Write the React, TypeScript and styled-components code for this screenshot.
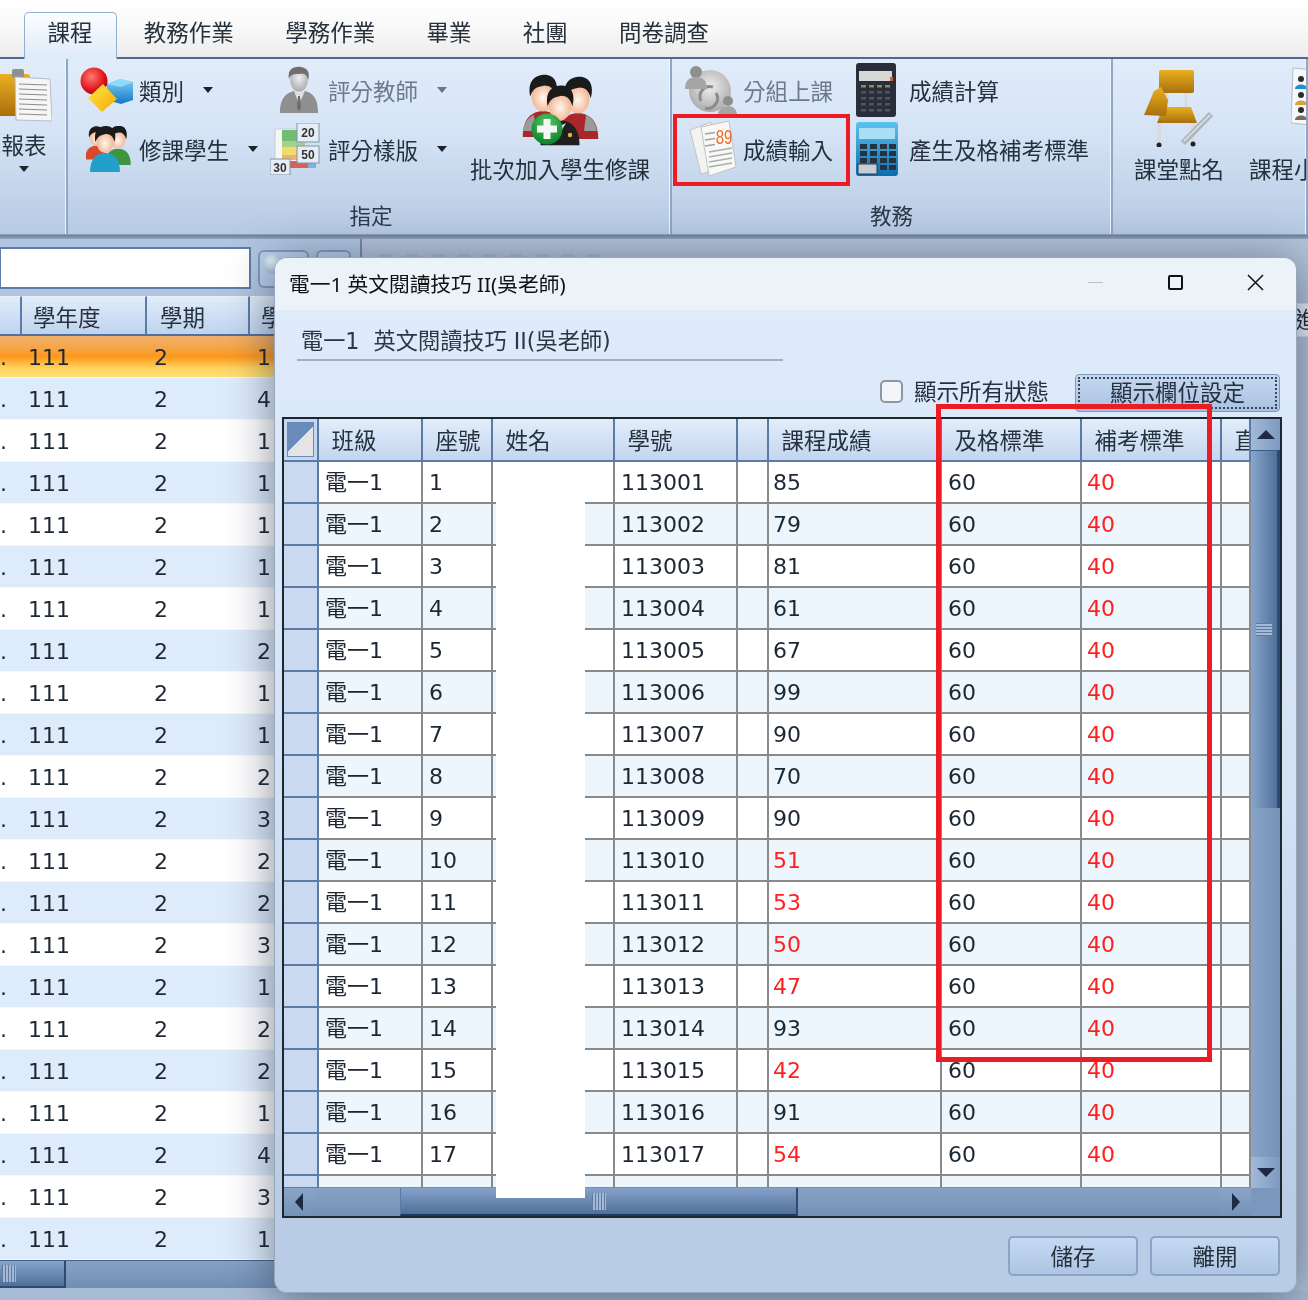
import styled, { createGlobalStyle } from 'styled-components';

const TEXT_FONT = `"DejaVu Sans", "Noto Sans CJK TC", sans-serif`;
const TITLE_FONT = `"Noto Sans", "Noto Sans CJK TC", sans-serif`;
const COLUMNS = '35px 104px 70px 122px 123px 31px 173px 140px 140px 29px';

const scores = [85, 79, 81, 61, 67, 99, 90, 70, 90, 51, 53, 50, 47, 93, 42, 91, 54];
const terms = [1, 4, 1, 1, 1, 1, 1, 2, 1, 1, 2, 3, 2, 2, 3, 1, 2, 2, 1, 4, 3, 1];
const tabs = ['課程', '教務作業', '學務作業', '畢業', '社團', '問卷調查'];

const GlobalStyle = createGlobalStyle`
   html, body {
      margin: 0;
      background: #a9bcd6;
   }
   *, *::before, *::after {
      box-sizing: border-box;
   }
`;

const Page = styled.div`
   position: relative;
   width: 1308px;
   height: 1300px;
   overflow: hidden;
   background: #a9bcd6;
   color: #1c2733;
   font-family: ${TEXT_FONT};
   font-size: 22.5px;
   filter: blur(0.5px);
`;

const Defs = styled.svg`
   position: absolute;
   width: 0;
   height: 0;
`;

/* top tabs */
const TabBar = styled.div`
   display: flex;
   align-items: flex-end;
   height: 59px;
   padding: 0 0 0 24px;
   background: linear-gradient(#ffffff, #f8f8f8 50%, #ececec);
   border-bottom: 2px solid #50698f;
`;

const Tab = styled.div<{ $active?: boolean }>`
   height: 47px;
   margin-right: 3.8px;
   margin-bottom: -2px;
   padding: 5px 23px 0 22.5px;
   line-height: 30px;
   color: #27313c;
   border: 1px solid ${p => (p.$active ? '#8fb0d2' : 'transparent')};
   border-bottom: 0;
   border-radius: 5px 5px 0 0;
   background: ${p => (p.$active ? 'linear-gradient(#fbfdff, #dfeaf8)' : 'transparent')};
`;

/* ribbon */
const Ribbon = styled.div`
   display: flex;
   height: 176px;
   background: linear-gradient(#e1ecfa, #d6e4f6 40%, #b6cae3);
   border-bottom: 1px solid #8ba0bd;
`;

const Group = styled.div<{ $width: number }>`
   display: flex;
   flex-direction: column;
   flex: none;
   width: ${p => p.$width}px;
   border-right: 2px solid #8fa6c4;
   box-shadow: inset -1px 0 0 #eef4fb;
   overflow: hidden;
`;

const GroupBody = styled.div<{ $pad?: number; $gap?: number }>`
   display: flex;
   flex: 1;
   gap: ${p => p.$gap ?? 0}px;
   padding: 1px 0 0 ${p => p.$pad ?? 0}px;
`;

const GroupLabel = styled.div<{ $shift?: number }>`
   height: 29px;
   padding: 0 0 4px ${p => p.$shift ?? 0}px;
   line-height: 24px;
   font-size: 21.5px;
   text-align: center;
   color: #2d3a49;
`;

const ItemColumn = styled.div<{ $width: number }>`
   flex: none;
   width: ${p => p.$width}px;
`;

const SmallItem = styled.div<{ $off?: boolean; $marked?: boolean }>`
   position: relative;
   display: flex;
   align-items: center;
   height: 59px;
   white-space: nowrap;
   color: ${p => (p.$off ? '#6d7a89' : '#26313d')};

   ${p =>
      p.$marked &&
      `
      &::after {
         content: '';
         position: absolute;
         left: -10px;
         top: -5px;
         width: 177px;
         height: 72px;
         border: 4px solid #ed1c24;
      }
   `}
`;

const IconSlot = styled.div<{ $width: number; $start?: boolean }>`
   display: flex;
   flex: none;
   align-items: center;
   justify-content: ${p => (p.$start ? 'flex-start' : 'center')};
   width: ${p => p.$width}px;
`;

const Caret = styled.span<{ $off?: boolean }>`
   flex: none;
   width: 0;
   height: 0;
   margin-left: 19px;
   border-style: solid;
   border-width: 6px 5px 0;
   border-color: ${p => (p.$off ? '#6b7684' : '#1d232b')} transparent transparent;
`;

const BigItem = styled.div<{ $width: number }>`
   display: flex;
   flex: none;
   flex-direction: column;
   align-items: center;
   width: ${p => p.$width}px;
   white-space: nowrap;
   color: #26313d;
`;

const BigIcon = styled.div`
   display: flex;
   align-items: flex-end;
   justify-content: center;
   height: 87px;
   margin-bottom: 5px;
`;

const RosterSlot = styled.div`
   padding: 0 0 13px 42px;
`;

const ReportItem = styled.div`
   display: flex;
   flex-direction: column;
   align-items: center;
   width: 48px;
   padding-top: 8px;
   color: #26313d;
`;

const ReportText = styled.span`
   margin-top: 6px;
`;

const ReportCaret = styled(Caret)`
   margin: 6px 0 0;
`;

const RibbonEdge = styled.div`
   height: 4px;
   background: linear-gradient(#6b7f9c, #93a3b9);
`;

/* area behind the dialog */
const Workspace = styled.div`
   display: flex;
   height: 1052px;
`;

const LeftPane = styled.div`
   flex: none;
   width: 362px;
`;

const SearchRow = styled.div`
   display: flex;
   gap: 7px;
   height: 57px;
   padding-top: 8px;
   background: #b1c5e0;
   border-right: 2px solid #6f89ad;
`;

const SearchInput = styled.div`
   width: 252px;
   height: 42px;
   margin-left: -1px;
   background: #fff;
   border: 2px solid #5d7ba6;
`;

const SearchButton = styled.div<{ $width: number }>`
   position: relative;
   width: ${p => p.$width}px;
   height: 38px;
   margin-top: 3px;
   border: 2px solid #7f99bd;
   border-radius: 6px;
   background: #bccfe8;
`;

const Orb = styled.div`
   position: absolute;
   left: 3px;
   top: 2px;
   width: 20px;
   height: 20px;
   border-radius: 50%;
   background: radial-gradient(circle at 40% 35%, #eef6fb, #9fc0d6 70%, #6e93ad);
`;

const BackHead = styled.div`
   display: grid;
   grid-template-columns: 22px 125px 103px 112px;
   height: 40px;
   background: #a9bcd6;
`;

const BackHeadCell = styled.div<{ $pad: number }>`
   padding-left: ${p => p.$pad}px;
   line-height: 42px;
   overflow: hidden;
   white-space: nowrap;
   color: #27313c;
   background: linear-gradient(#e1ecfa, #bfd3ee);
   border-right: 2px solid #5c7ba6;
   border-top: 1px solid #e8f0fa;
   border-bottom: 2px solid #50709d;
`;

const BackRow = styled.div<{ $tone: 'picked' | 'white' | 'blue' }>`
   display: grid;
   grid-template-columns: 22px 125px 103px 112px;
   height: 42px;
   line-height: 43px;
   font-size: 22px;
   color: #1d2833;
   border-bottom: 1px solid #f4f8fd;
   background: ${p =>
      p.$tone === 'picked'
         ? 'linear-gradient(#efb06e, #f7a446 30%, #fd981d 50%, #ffd25c 78%, #ffe07a)'
         : p.$tone === 'blue'
         ? '#deebfa'
         : '#fff'};
`;

const BackCell = styled.div<{ $pad: number }>`
   padding-left: ${p => p.$pad}px;
   overflow: hidden;
`;

const BackScroll = styled.div`
   height: 28px;
   background: linear-gradient(#88a2c6, #6f8eb4);
   border-top: 1px solid #45618a;
`;

const BackThumb = styled.div`
   display: flex;
   align-items: center;
   width: 66px;
   height: 27px;
   padding-left: 2px;
   background: linear-gradient(#86a4cc, #4f7099);
   border-right: 2px solid #2e4a72;
   border-bottom: 2px solid #2e4a72;
`;

const Grip = styled.div<{ $vertical?: boolean }>`
   width: ${p => (p.$vertical ? '16px' : '14px')};
   height: ${p => (p.$vertical ? '13px' : '17px')};
   background: ${p =>
      p.$vertical
         ? 'repeating-linear-gradient(#5d7aa0 0 1px, #a5b9d4 1px 3px)'
         : 'repeating-linear-gradient(90deg, #5d7aa0 0 1px, #a5b9d4 1px 3px)'};
`;

const RightPane = styled.div`
   flex: 1;
   min-width: 0;
   padding-top: 15px;
   background: #b3c3d9;
`;

/* tops of letters hidden by the dialog, too little of them shows to read */
const BackMarks = styled.div`
   width: 230px;
   height: 3px;
   margin: 0 0 46px 18px;
   background: repeating-linear-gradient(90deg, #a6b8d2 0 12px, transparent 12px 26px);
`;

const SideHead = styled.div`
   width: 14px;
   height: 34px;
   margin-left: auto;
   padding-left: 1px;
   line-height: 32px;
   overflow: hidden;
   white-space: nowrap;
   background: #e9f0f7;
   border-top: 1px solid #cfdbe7;
   border-bottom: 1px solid #cfdbe7;
`;

/* dialog */
const Dialog = styled.div`
   position: absolute;
   left: 274px;
   top: 257px;
   display: flex;
   flex-direction: column;
   width: 1023px;
   height: 1036px;
   overflow: hidden;
   border: 1px solid #98a7bc;
   border-radius: 13px;
   box-shadow: 0 6px 46px rgba(28, 38, 58, 0.55);
`;

const TitleBar = styled.div`
   display: flex;
   align-items: center;
   flex: none;
   height: 52px;
   padding: 0 0 3px 14px;
   background: #ebf3f9;
   color: #111;
   font-family: ${TITLE_FONT};
   font-size: 20.7px;
`;

const TitleText = styled.div`
   flex: 1;
`;

const WindowButton = styled.div<{ $width: number }>`
   display: flex;
   flex: none;
   align-items: center;
   justify-content: center;
   width: ${p => p.$width}px;
`;

const MinDash = styled.div`
   width: 15px;
   height: 1px;
   background: #b9c3cc;
`;

const MaxBox = styled.div`
   width: 15px;
   height: 15px;
   border: 2px solid #111;
   border-radius: 2px;
`;

const DialogBody = styled.div`
   display: flex;
   flex: 1;
   flex-direction: column;
   padding: 0 15px 0 7px;
   background: linear-gradient(#dfebfb, #d2e1f4 50%, #b8cce5 92%);
`;

const Heading = styled.div`
   display: flex;
   align-items: flex-end;
   flex: none;
   width: 486px;
   height: 51px;
   margin-left: 15px;
   padding: 0 0 5px 4px;
   line-height: 26px;
   font-size: 22.2px;
   white-space: pre;
   color: #2c3743;
   border-bottom: 2px solid #a6aeba;
`;

const OptionRow = styled.div`
   display: flex;
   align-items: center;
   justify-content: flex-end;
   flex: none;
   height: 38px;
   margin: 13px 1px 0 0;
`;

const CheckBox = styled.div`
   width: 23px;
   height: 23px;
   margin: 0 11px 4px 0;
   background: #f3f5f8;
   border: 2px solid #8d98a5;
   border-radius: 5px;
`;

const CheckText = styled.div`
   margin: 0 26px 6px 0;
   color: #26313d;
`;

const FocusButton = styled.div`
   width: 205px;
   height: 38px;
   padding: 2px;
   text-align: center;
   color: #26313d;
   background: linear-gradient(#c6d8f0, #a9c2e1);
   border: 1px solid #7f99bd;
   border-radius: 4px;
`;

const FocusInner = styled.div`
   height: 100%;
   line-height: 28px;
   border: 2px dotted #3a4654;
`;

const TableFrame = styled.div`
   position: relative;
   flex: none;
   width: 1000px;
   height: 801px;
   margin-top: 5px;
   background: #fff;
   border: 2px solid #1e2630;
`;

const TableTop = styled.div`
   display: flex;
   height: 769px;
`;

const Cells = styled.div`
   width: 967px;
   height: 769px;
   overflow: hidden;
   background: #fff;
`;

const HeadRow = styled.div`
   display: grid;
   grid-template-columns: ${COLUMNS};
   height: 43px;
`;

const CornerCell = styled.div`
   padding: 4px;
   background: #c6d8f0;
   border-right: 2px solid #5b7aa6;
   border-bottom: 2px solid #5b7aa6;
`;

const CornerMark = styled.div`
   width: 100%;
   height: 100%;
   background: linear-gradient(135deg, #6a8bba 50%, #e4e4e4 50%);
   outline: 1px solid #6a8bba;
`;

const HeadCell = styled.div`
   padding-left: 12.5px;
   line-height: 45px;
   overflow: hidden;
   white-space: nowrap;
   color: #27313c;
   background: linear-gradient(#e2edfb, #c3d6f0);
   border-right: 2px solid #5b7aa6;
   border-bottom: 2px solid #5b7aa6;
`;

const DataRow = styled.div<{ $stripe: boolean; $short?: boolean }>`
   display: grid;
   grid-template-columns: ${COLUMNS};
   height: ${p => (p.$short ? '13px' : '42px')};
   font-size: 22px;
   background: ${p => (p.$stripe ? '#edf5fd' : '#fff')};
`;

const RowHead = styled.div`
   background: #c9daf0;
   border-right: 2px solid #5b7aa6;
   border-bottom: 2px solid #5b7aa6;
`;

const DataCell = styled.div<{ $pad?: number; $low?: boolean }>`
   padding-left: ${p => p.$pad ?? 6}px;
   line-height: 42px;
   overflow: hidden;
   white-space: nowrap;
   color: ${p => (p.$low ? '#ff1f1f' : '#1c2733')};
   border-right: 2px solid #8a8a8a;
   border-bottom: 2px solid #8a8a8a;
`;

const VScroll = styled.div`
   display: flex;
   flex-direction: column;
   flex: 1;
   background: linear-gradient(90deg, #8aa4c8, #7592b8);
`;

const VScrollEnd = styled.div<{ $size: number }>`
   display: flex;
   flex: none;
   align-items: center;
   justify-content: center;
   height: ${p => p.$size}px;
   background: linear-gradient(90deg, #a3bad8, #7d99bf);
`;

const VThumb = styled.div`
   display: flex;
   align-items: center;
   justify-content: center;
   flex: none;
   height: 358px;
   background: linear-gradient(90deg, #88a6cd, #4f7099);
   border-top: 1px solid #3f5c86;
   border-right: 3px solid #2e4a72;
`;

const VScrollGap = styled.div`
   flex: 1;
`;

const ScrollArrow = styled.span<{ $dir: 'up' | 'down' | 'left' | 'right' }>`
   width: 0;
   height: 0;
   border-style: solid;
   border-color: transparent;
   ${p =>
      p.$dir === 'up'
         ? 'border-width: 0 9px 9px; border-bottom-color: #1d2a45;'
         : p.$dir === 'down'
         ? 'border-width: 9px 9px 0; border-top-color: #1d2a45;'
         : p.$dir === 'left'
         ? 'border-width: 9px 8px 9px 0; border-right-color: #1d2a45;'
         : 'border-width: 9px 0 9px 8px; border-left-color: #1d2a45;'}
`;

const HScroll = styled.div`
   display: flex;
   height: 28px;
   background: linear-gradient(#88a2c6, #7391b7);
`;

const HScrollButton = styled.div<{ $width: number }>`
   display: flex;
   flex: none;
   align-items: center;
   justify-content: center;
   width: ${p => p.$width}px;
   background: linear-gradient(#8aa4c8, #7592b8);
`;

const HThumb = styled.div`
   display: flex;
   align-items: center;
   justify-content: center;
   flex: none;
   width: 398px;
   margin-left: 86px;
   background: linear-gradient(#84a2ca, #4f7099);
   border-right: 2px solid #2e4a72;
   border-bottom: 2px solid #22385c;
   border-left: 1px solid #5a7aa5;
`;

const HGap = styled.div`
   flex: 1;
`;

const HCorner = styled.div`
   flex: none;
   width: 29px;
   background: #7b97bd;
`;

const NameCover = styled.div`
   position: absolute;
   left: 212px;
   top: 51px;
   width: 89px;
   height: 728px;
   background: #fff;
`;

const ColumnMark = styled.div`
   position: absolute;
   left: 661px;
   top: 146px;
   width: 276px;
   height: 658px;
   border: 5px solid #ed1c24;
`;

const FooterRow = styled.div`
   display: flex;
   justify-content: flex-end;
   gap: 12px;
   flex: none;
   margin: 18px 1px 0 0;
`;

const FooterButton = styled.div`
   width: 130px;
   height: 40px;
   line-height: 38px;
   text-align: center;
   color: #26313d;
   background: linear-gradient(#c6d9f2, #adc5e3);
   border: 2px solid #8ba3c4;
   border-radius: 5px;
`;

/* ---- drawings ---- */
const Gradients = () => (
   <Defs>
      <defs>
         <radialGradient id="skin" cx="50%" cy="55%" r="60%">
            <stop offset="0" stopColor="#fff6ee" />
            <stop offset="1" stopColor="#f1a97f" />
         </radialGradient>
         <radialGradient id="ball" cx="40%" cy="35%" r="70%">
            <stop offset="0" stopColor="#ff7a70" />
            <stop offset="0.7" stopColor="#e3101a" />
            <stop offset="1" stopColor="#8d0a12" />
         </radialGradient>
         <linearGradient id="blue" x1="0" y1="0" x2="0" y2="1">
            <stop offset="0" stopColor="#7fd0f5" />
            <stop offset="1" stopColor="#1477c4" />
         </linearGradient>
         <linearGradient id="gold" x1="0" y1="0" x2="1" y2="1">
            <stop offset="0" stopColor="#ffe84a" />
            <stop offset="1" stopColor="#f7a800" />
         </linearGradient>
         <linearGradient id="wood" x1="0" y1="0" x2="0" y2="1">
            <stop offset="0" stopColor="#eab020" />
            <stop offset="1" stopColor="#a86f0e" />
         </linearGradient>
         <radialGradient id="grayball" cx="50%" cy="40%" r="65%">
            <stop offset="0" stopColor="#eeeeee" />
            <stop offset="1" stopColor="#a6a6a6" />
         </radialGradient>
         <radialGradient id="greenball" cx="50%" cy="30%" r="70%">
            <stop offset="0" stopColor="#58c768" />
            <stop offset="1" stopColor="#0c8127" />
         </radialGradient>
         <linearGradient id="calc" x1="0" y1="0" x2="0" y2="1">
            <stop offset="0" stopColor="#5ac4ee" />
            <stop offset="1" stopColor="#0b6cae" />
         </linearGradient>
      </defs>
   </Defs>
);

const Person = ({ x, y, s, shirt }: { x: number; y: number; s: number; shirt: string }) => (
   <g transform={`translate(${x} ${y}) scale(${s})`}>
      <path d="M-15 34C-15 20-8 15 0 15S15 20 15 34Z" fill={shirt} />
      <ellipse cx="0" cy="4" rx="8.5" ry="11" fill="url(#skin)" />
      <path d="M-9.5 4C-12-9-4-12 1-12 9-12 12-5 9.5 4 8-2 5-4 1-4-3-3-7-3-9.5 4Z" fill="#1b1b1b" />
   </g>
);

const ClipboardIcon = () => (
   <svg width="56" height="54" viewBox="0 0 56 54">
      <rect x="2" y="6" width="32" height="42" rx="3" fill="url(#wood)" />
      <rect x="16" y="1" width="12" height="9" rx="2" fill="#8f8f8f" />
      <path d="M19 9 54 11 56 53 20 52Z" fill="#f6f6f6" stroke="#b5bdc8" />
      {[16, 21, 26, 31, 36, 41, 46].map(y => (
         <path key={y} d={`M23 ${y} 51 ${y + 1}`} stroke="#8d8d8d" strokeWidth="1.2" />
      ))}
   </svg>
);

const ShapesIcon = () => (
   <svg width="54" height="46" viewBox="0 0 54 46">
      <path d="M27 17 40 12 53 15V33L41 37 27 33Z" fill="url(#blue)" />
      <path d="M27 17 40 12 53 15 41 20Z" fill="#8edaf8" />
      <circle cx="14" cy="14" r="13.5" fill="url(#ball)" />
      <path d="M23 17 37 32 22 45 8 31Z" fill="url(#gold)" />
   </svg>
);

const ManIcon = () => (
   <svg width="40" height="48" viewBox="0 0 40 48">
      <path d="M1 47C1 32 7 27 15 25L20 29 26 25C34 27 39 32 39 47Z" fill="#8f8f8f" />
      <path d="M15 25 20 38 26 25 20 29Z" fill="#e4e4e4" />
      <path d="M19 30 21 30 22 42 20 45 18 42Z" fill="#6c6c6c" />
      <ellipse cx="20" cy="14" rx="9" ry="11.5" fill="url(#grayball)" />
      <path d="M10 13C8 3 15 0 22 1 30 2 31 9 29 14 28 8 25 7 20 8 15 8 12 8 10 13Z" fill="#6f6f6f" />
   </svg>
);

const StudentsIcon = () => (
   <svg width="48" height="46" viewBox="0 0 48 46">
      <Person x={10} y={9} s={0.72} shirt="#d94a2c" />
      <Person x={32} y={10} s={0.85} shirt="#3f9440" />
      <Person x={19} y={12} s={1} shirt="#22a0cc" />
   </svg>
);

const ScoreIcon = () => (
   <svg width="50" height="52" viewBox="0 0 50 52">
      <rect x="5" y="6" width="31" height="36" fill="#f5f7f2" stroke="#c6cdd6" />
      <rect x="12" y="7" width="23" height="11" fill="#6fbe72" />
      <rect x="12" y="18" width="23" height="6" fill="#a6d18a" />
      <rect x="12" y="24" width="23" height="8" fill="#f0dc6e" />
      <rect x="12" y="32" width="23" height="5" fill="#efb26a" />
      <rect x="18" y="38" width="20" height="7" fill="#d9615a" />
      <rect x="38" y="38" width="8" height="7" fill="#7fb0e0" />
      <rect x="27" y="0" width="22" height="19" fill="#e6edf6" stroke="#7f93ac" />
      <rect x="27" y="23" width="22" height="17" fill="#e6edf6" stroke="#7f93ac" />
      <rect x="0" y="36" width="20" height="16" fill="#e6edf6" stroke="#7f93ac" />
      <text x="38" y="14" textAnchor="middle" fontSize="12" fontWeight="700" fontFamily="Liberation Sans" fill="#333">20</text>
      <text x="38" y="36" textAnchor="middle" fontSize="12" fontWeight="700" fontFamily="Liberation Sans" fill="#333">50</text>
      <text x="10" y="49" textAnchor="middle" fontSize="12" fontWeight="700" fontFamily="Liberation Sans" fill="#333">30</text>
   </svg>
);

const BatchIcon = () => (
   <svg width="80" height="76" viewBox="0 0 80 76">
      <Person x={23} y={20} s={1.35} shirt="#a9272b" />
      <Person x={58} y={22} s={1.35} shirt="#a9272b" />
      <path d="M3 60C5 50 9 46 14 44L16 60ZM77 60C75 50 71 46 66 44L64 60Z" fill="#9a9a9a" />
      <Person x={40} y={30} s={1.3} shirt="#1f1f1f" />
      <path d="M34 52 40 62 46 52 40 55Z" fill="#e8e8e8" />
      <circle cx="50" cy="64" r="2.2" fill="#e2b72f" />
      <circle cx="27" cy="58" r="15.5" fill="url(#greenball)" />
      <path d="M23.5 48H30.5V54.5H37V61.5H30.5V68H23.5V61.5H17V54.5H23.5Z" fill="#f4f7f4" />
   </svg>
);

const GroupsIcon = () => (
   <svg width="54" height="54" viewBox="0 0 54 54">
      <circle cx="27" cy="28" r="21" fill="url(#grayball)" />
      <path d="M18 38A10 10 0 0 1 30 24M33 30A10 10 0 0 1 22 45" stroke="#8c8c8c" strokeWidth="3" fill="none" />
      <circle cx="13" cy="9" r="6" fill="#8e8e8e" />
      <path d="M2 26C2 16 8 14 13 14S24 16 24 26Z" fill="#a5a5a5" />
      <circle cx="45" cy="38" r="5" fill="#8e8e8e" />
      <path d="M35 53C35 46 40 43 45 43S54 46 54 53Z" fill="#a5a5a5" />
   </svg>
);

const EntryIcon = () => (
   <svg width="48" height="58" viewBox="0 0 48 58">
      <path d="M1 10 22 2 32 48 12 54Z" fill="#f3f3f0" stroke="#c1c4c6" />
      <path d="M12 7 40 1 47 47 20 56Z" fill="#f8f8f5" stroke="#bfc3c6" />
      {[14, 20, 26].map(y => (
         <path key={y} d={`M16 ${y} 26 ${y - 1.5}`} stroke="#9fa4a8" strokeWidth="1.6" />
      ))}
      {[32, 37, 42, 47].map(y => (
         <path key={y} d={`M20 ${y} 43 ${y - 4}`} stroke="#a9aeb2" strokeWidth="1.6" />
      ))}
      <text x="35" y="23" textAnchor="middle" fontSize="15" fontFamily="Liberation Sans" fill="#ef6a2b" transform="translate(0 -6) scale(1 1.3)">89</text>
   </svg>
);

const DarkCalculatorIcon = () => (
   <svg width="40" height="54" viewBox="0 0 40 54">
      <rect width="40" height="54" rx="3" fill="#2a2e3a" />
      <rect x="3" y="8" width="33" height="10" fill="#d7d9d6" />
      {[22, 28, 34, 40, 46].map(y =>
         [5, 13, 21, 29].map(x => <rect key={`${x}-${y}`} x={x} y={y} width="5" height="2.5" fill={y === 22 ? '#8f8b54' : '#4c5468'} />),
      )}
      <rect x="34" y="14" width="3" height="4" fill="#dd5a2a" />
   </svg>
);

const BlueCalculatorIcon = () => (
   <svg width="42" height="54" viewBox="0 0 42 54">
      <rect width="42" height="54" rx="3" fill="url(#calc)" />
      <rect x="3" y="6" width="36" height="11" fill="#a9dff4" />
      {[22, 29, 36].map(y =>
         [4, 14, 24, 33].map(x => <rect key={`${x}-${y}`} x={x} y={y} width="7" height="5" fill="#263240" />),
      )}
      <rect x="2" y="42" width="19" height="10" fill="#c9ced4" stroke="#2b3a4a" />
      {[24, 33].map(x => (
         <rect key={x} x={x} y="43" width="7" height="5" fill="#263240" />
      ))}
   </svg>
);

const ChairIcon = () => (
   <svg width="72" height="78" viewBox="0 0 72 78">
      <path d="M24 22V40M43 22V40" stroke="#d8dce0" strokeWidth="3" />
      <rect x="16" y="1" width="35" height="23" rx="2" fill="url(#wood)" />
      <path d="M20 38H48L54 54H14Z" fill="url(#wood)" />
      <path d="M11 22 18 18 25 31 23 47 1 46Z" fill="url(#wood)" />
      <path d="M16 54V76M50 54V74" stroke="#d8dce0" strokeWidth="4" />
      <circle cx="16" cy="76" r="2.5" fill="#222" />
      <circle cx="50" cy="75" r="2.5" fill="#222" />
      <path d="M40 74 68 45" stroke="#aeb6bf" strokeWidth="6" />
      <path d="M41 72 67 46" stroke="#dfe3e7" strokeWidth="1.5" />
   </svg>
);

const RosterIcon = () => (
   <svg width="48" height="62" viewBox="0 0 48 62">
      <path d="M2 1 47 5V61L0 56Z" fill="#f6f8fa" stroke="#b3bbc6" />
      <circle cx="10" cy="12" r="3" fill="#2c2c2c" />
      <path d="M4 22C4 16 16 16 16 22Z" fill="#1f8fd0" />
      <circle cx="10" cy="28" r="3" fill="#2c2c2c" />
      <path d="M4 38C4 32 16 32 16 38Z" fill="#d7a23a" />
      <circle cx="10" cy="43" r="3" fill="#2c2c2c" />
      <path d="M4 53C4 47 16 47 16 53Z" fill="#7c6a5b" />
   </svg>
);

const CloseIcon = () => (
   <svg width="17" height="17" viewBox="0 0 17 17">
      <path d="M1 1 16 16M16 1 1 16" stroke="#111" strokeWidth="1.5" fill="none" />
   </svg>
);

const Small = ({ icon, slot, label, off, caret, marked, start }: { icon: any; slot: number; label: string; off?: boolean; caret?: boolean; marked?: boolean; start?: boolean }) => (
   <SmallItem $off={off} $marked={marked}>
      <IconSlot $width={slot} $start={start}>
         {icon}
      </IconSlot>
      {label}
      {caret && <Caret $off={off} />}
   </SmallItem>
);

const App = () => {
   return (
      <>
         <GlobalStyle />
         <Page>
            <Gradients />
            <TabBar>
               {tabs.map((t, i) => (
                  <Tab key={t} $active={i === 0}>
                     {t}
                  </Tab>
               ))}
            </TabBar>

            <Ribbon>
               <Group $width={68}>
                  <GroupBody>
                     <ReportItem>
                        <ClipboardIcon />
                        <ReportText>報表</ReportText>
                        <ReportCaret />
                     </ReportItem>
                  </GroupBody>
               </Group>

               <Group $width={604}>
                  <GroupBody $pad={12}>
                     <ItemColumn $width={190}>
                        <Small icon={<ShapesIcon />} slot={59} label="類別" caret start />
                        <Small icon={<StudentsIcon />} slot={59} label="修課學生" caret />
                     </ItemColumn>
                     <ItemColumn $width={200}>
                        <Small icon={<ManIcon />} slot={58} label="評分教師" off caret />
                        <Small icon={<ScoreIcon />} slot={58} label="評分樣版" caret start />
                     </ItemColumn>
                     <BigItem $width={180}>
                        <BigIcon>
                           <BatchIcon />
                        </BigIcon>
                        批次加入學生修課
                     </BigItem>
                  </GroupBody>
                  <GroupLabel $shift={4}>指定</GroupLabel>
               </Group>

               <Group $width={441}>
                  <GroupBody $pad={11}>
                     <ItemColumn $width={173}>
                        <Small icon={<GroupsIcon />} slot={60} label="分組上課" off start />
                        <Small icon={<EntryIcon />} slot={60} label="成績輸入" marked />
                     </ItemColumn>
                     <ItemColumn $width={250}>
                        <Small icon={<DarkCalculatorIcon />} slot={53} label="成績計算" start />
                        <Small icon={<BlueCalculatorIcon />} slot={53} label="產生及格補考標準" start />
                     </ItemColumn>
                  </GroupBody>
                  <GroupLabel>教務</GroupLabel>
               </Group>

               <Group $width={195}>
                  <GroupBody $pad={21} $gap={25}>
                     <BigItem $width={90}>
                        <BigIcon>
                           <ChairIcon />
                        </BigIcon>
                        課堂點名
                     </BigItem>
                     <BigItem $width={90}>
                        <BigIcon>
                           <RosterSlot>
                              <RosterIcon />
                           </RosterSlot>
                        </BigIcon>
                        課程小組
                     </BigItem>
                  </GroupBody>
               </Group>
            </Ribbon>
            <RibbonEdge />

            <Workspace>
               <LeftPane>
                  <SearchRow>
                     <SearchInput />
                     <SearchButton $width={51}>
                        <Orb />
                     </SearchButton>
                     <SearchButton $width={35} />
                  </SearchRow>
                  <BackHead>
                     <BackHeadCell $pad={0} />
                     <BackHeadCell $pad={11}>學年度</BackHeadCell>
                     <BackHeadCell $pad={13}>學期</BackHeadCell>
                     <BackHeadCell $pad={11}>學</BackHeadCell>
                  </BackHead>
                  {terms.map((t, i) => (
                     <BackRow key={i} $tone={i === 0 ? 'picked' : i % 2 === 1 ? 'blue' : 'white'}>
                        <BackCell $pad={0}>.</BackCell>
                        <BackCell $pad={6}>111</BackCell>
                        <BackCell $pad={7}>2</BackCell>
                        <BackCell $pad={7}>{t}</BackCell>
                     </BackRow>
                  ))}
                  <BackScroll>
                     <BackThumb>
                        <Grip />
                     </BackThumb>
                  </BackScroll>
               </LeftPane>
               <RightPane>
                  <BackMarks />
                  <SideHead>進</SideHead>
               </RightPane>
            </Workspace>

            <Dialog>
               <TitleBar>
                  <TitleText>電一1 英文閱讀技巧 II(吳老師)</TitleText>
                  <WindowButton $width={80}>
                     <MinDash />
                  </WindowButton>
                  <WindowButton $width={80}>
                     <MaxBox />
                  </WindowButton>
                  <WindowButton $width={81}>
                     <CloseIcon />
                  </WindowButton>
               </TitleBar>

               <DialogBody>
                  <Heading>電一1  英文閱讀技巧 II(吳老師)</Heading>
                  <OptionRow>
                     <CheckBox />
                     <CheckText>顯示所有狀態</CheckText>
                     <FocusButton>
                        <FocusInner>顯示欄位設定</FocusInner>
                     </FocusButton>
                  </OptionRow>

                  <TableFrame>
                     <TableTop>
                        <Cells>
                           <HeadRow>
                              <CornerCell>
                                 <CornerMark />
                              </CornerCell>
                              {['班級', '座號', '姓名', '學號', '', '課程成績', '及格標準', '補考標準', '直'].map((h, i) => (
                                 <HeadCell key={i}>{h}</HeadCell>
                              ))}
                           </HeadRow>
                           {scores.map((score, i) => (
                              <DataRow key={i} $stripe={i % 2 === 1}>
                                 <RowHead />
                                 <DataCell>電一1</DataCell>
                                 <DataCell>{i + 1}</DataCell>
                                 <DataCell />
                                 <DataCell>{113001 + i}</DataCell>
                                 <DataCell />
                                 <DataCell $pad={4} $low={score < 60}>
                                    {score}
                                 </DataCell>
                                 <DataCell $pad={6}>60</DataCell>
                                 <DataCell $pad={5} $low>
                                    40
                                 </DataCell>
                                 <DataCell />
                              </DataRow>
                           ))}
                           <DataRow $stripe $short>
                              <RowHead />
                              {Array.from({ length: 9 }).map((_, i) => (
                                 <DataCell key={i} />
                              ))}
                           </DataRow>
                        </Cells>
                        <VScroll>
                           <VScrollEnd $size={31}>
                              <ScrollArrow $dir="up" />
                           </VScrollEnd>
                           <VThumb>
                              <Grip $vertical />
                           </VThumb>
                           <VScrollGap />
                           <VScrollEnd $size={31}>
                              <ScrollArrow $dir="down" />
                           </VScrollEnd>
                        </VScroll>
                     </TableTop>
                     <HScroll>
                        <HScrollButton $width={30}>
                           <ScrollArrow $dir="left" />
                        </HScrollButton>
                        <HThumb>
                           <Grip />
                        </HThumb>
                        <HGap />
                        <HScrollButton $width={30}>
                           <ScrollArrow $dir="right" />
                        </HScrollButton>
                        <HCorner />
                     </HScroll>
                     <NameCover />
                  </TableFrame>
                  <ColumnMark />

                  <FooterRow>
                     <FooterButton>儲存</FooterButton>
                     <FooterButton>離開</FooterButton>
                  </FooterRow>
               </DialogBody>
            </Dialog>
         </Page>
      </>
   );
};

export default App;
